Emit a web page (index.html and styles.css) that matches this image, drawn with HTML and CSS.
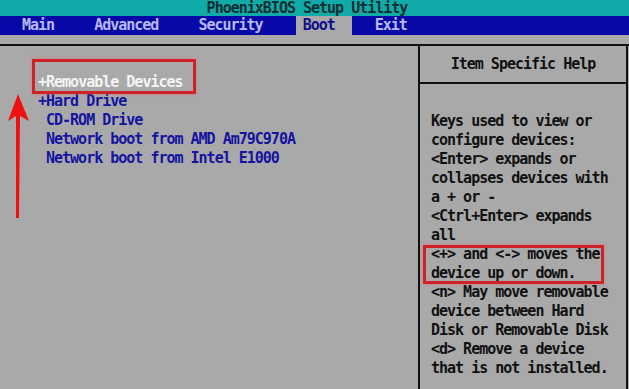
FILE: index.html
```html
<!DOCTYPE html>
<html lang="en">
<head>
    <meta charset="UTF-8">
    <title>PhoenixBIOS Setup Utility</title>
    <link rel="stylesheet" href="styles.css">
</head>
<body>
    <div class="screen">
        <div class="title">PhoenixBIOS Setup Utility</div>
        <div class="menu">
            <span class="tab">Main</span>
            <span class="tab">Advanced</span>
            <span class="tab">Security</span>
            <span class="tab active">Boot</span>
            <span class="tab">Exit</span>
        </div>

        <div class="frame">
            <div class="boot-list">
                <div class="row selected">+Removable Devices</div>
                <div class="row">+Hard Drive</div>
                <div class="row sub">CD-ROM Drive</div>
                <div class="row sub">Network boot from AMD Am79C970A</div>
                <div class="row sub">Network boot from Intel E1000</div>
            </div>
            <div class="help">
                <div class="help-title">Item Specific Help</div>
                <div class="help-body">
                    <div>Keys used to view or</div>
                    <div>configure devices:</div>
                    <div>&lt;Enter&gt; expands or</div>
                    <div>collapses devices with</div>
                    <div>a + or -</div>
                    <div>&lt;Ctrl+Enter&gt; expands</div>
                    <div>all</div>
                    <div class="mark">
                        <div>&lt;+&gt; and &lt;-&gt; moves the</div>
                        <div>device up or down.</div>
                    </div>
                    <div>&lt;n&gt; May move removable</div>
                    <div>device between Hard</div>
                    <div>Disk or Removable Disk</div>
                    <div>&lt;d&gt; Remove a device</div>
                    <div>that is not installed.</div>
                </div>
            </div>
        </div>

        <!-- annotations drawn over the screenshot -->
        <div class="callout"></div>
        <svg class="arrow" width="40" height="140" viewBox="0 0 40 140">
            <polygon points="18,4 29,31 20,26 19,128 16,128 16,26 8,31" fill="#f01010"/>
        </svg>
    </div>
</body>
</html>
```

FILE: styles.css
```css
body { margin: 0; background: #a9a9a9; font-family: "DejaVu Sans Mono", "Liberation Mono", monospace; font-size: 15px; letter-spacing: -1px; font-weight: bold; }
.screen { position: relative; width: 629px; height: 389px; overflow: hidden; background: #a9a9a9; }

.title { height: 16px; line-height: 16px; background: #10aaa8; color: #0e2f33; display: flex; justify-content: center; padding-right: 15px; }

.menu { height: 19px; line-height: 19px; background: #0808a6; display: flex; gap: 16px; padding-left: 15px; }
.tab { color: #b8b8f6; padding: 0 17px 0 7px; }
.tab.active { background: #a9a9a9; color: #10108a; }

.frame { margin-top: 9px; display: flex; border-top: 2px solid #111; height: 400px; }
.boot-list { width: 380px; padding: 27px 0 0 38px; }
.row { line-height: 19px; color: #1414a0; white-space: pre; }
.row.sub { padding-left: 8px; }
.row.selected { color: #f4f4f4; }

.help { width: 206px; border-left: 2px solid #111; border-right: 2px solid #111; color: #111; }
.help-title { height: 36px; line-height: 36px; text-align: center; border-bottom: 2px solid #111; }
.help-body { padding: 28px 0 0 11px; line-height: 19px; white-space: nowrap; }

.mark { position: relative; }
.mark::after { content: ""; position: absolute; left: -8px; top: 0; width: 175px; height: 33px; border: 3px solid #cc2228; box-shadow: 0 0 3px rgba(255, 90, 90, 0.6); }

.callout { position: absolute; left: 32px; top: 59px; width: 158px; height: 29px; border: 3px solid #cc2228; box-shadow: 0 0 3px rgba(255, 90, 90, 0.6); }
.arrow { position: absolute; left: 0; top: 90px; }
```
